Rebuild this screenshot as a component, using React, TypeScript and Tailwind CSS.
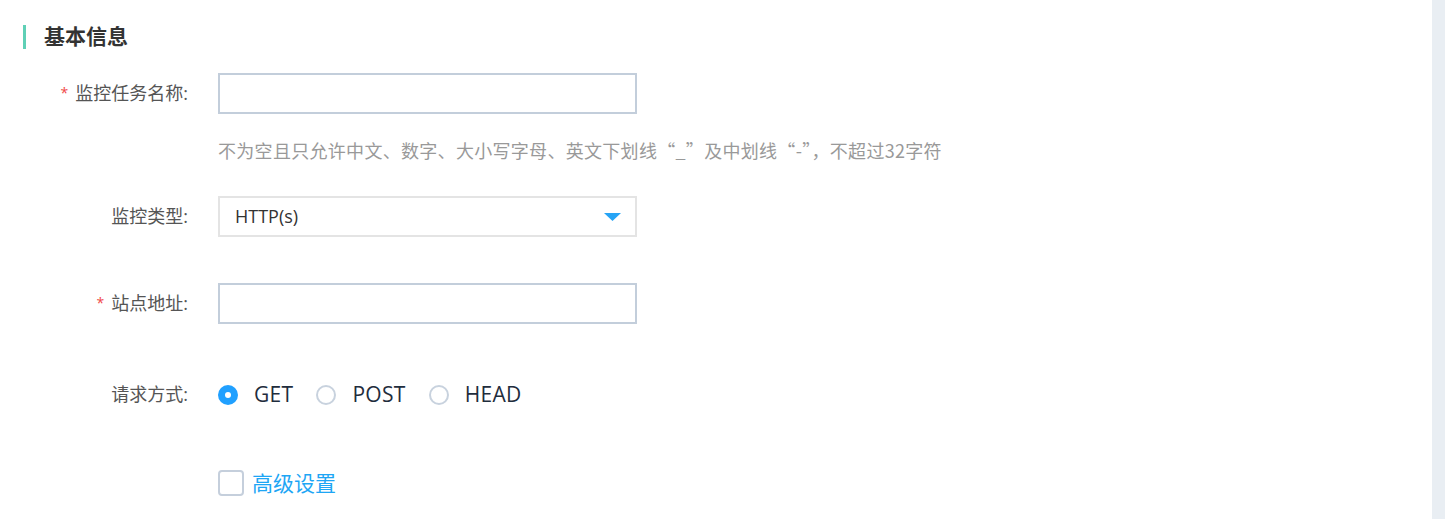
import React from "react";

const font = { fontFamily: '"Open Sans", "Noto Sans CJK SC", sans-serif' };
const cjk = { fontFamily: '"Noto Sans CJK SC", "Open Sans", sans-serif' };

function Label({ text, required }: { text: string; required?: boolean }) {
  return (
    <div className="w-[188px] shrink-0 text-right text-[18px] text-[#555]">
      {required && <span className="text-[#f04848] text-[14px] mr-[7px] align-[2px]">*</span>}
      {text}:
    </div>
  );
}

function Radio({ label, checked }: { label: string; checked?: boolean }) {
  return (
    <label className="flex items-center mr-[23px]">
      {checked ? (
        <span className="w-[20px] h-[20px] rounded-full bg-[#20a0ff] flex items-center justify-center">
          <span className="w-[6px] h-[6px] rounded-full bg-white" />
        </span>
      ) : (
        <span className="w-[20px] h-[20px] rounded-full border-2 border-[#c8d2de] bg-white" />
      )}
      <span className="ml-[16px] text-[21px] tracking-[0.3px] text-[#1f2d3d]">{label}</span>
    </label>
  );
}

export default function App() {
  return (
    <div className="flex w-[1446px] h-[522px] bg-white" style={font}>
      <div className="flex-1">
        <div className="flex items-center h-[24px] mt-[25px] ml-[23px]">
          <div className="w-[3px] h-[24px] bg-[#5fd0b6]" />
          <h2 className="ml-[18px] text-[21px] font-bold text-[#333]">基本信息</h2>
        </div>

        <div className="flex items-center mt-[24px]">
          <Label text="监控任务名称" required />
          <input className="ml-[30px] w-[419px] h-[41px] border-2 border-[#c3cedb] outline-none px-3" />
        </div>
        <p className="ml-[218px] mt-[23px] text-[18px] tracking-[0.3px] text-[#999]" style={cjk}>
          不为空且只允许中文、数字、大小写字母、英文下划线“_”及中划线“-”，不超过32字符
        </p>

        <div className="flex items-center mt-[32px]">
          <Label text="监控类型" />
          <div className="ml-[30px] w-[419px] h-[41px] border-2 border-[#e4e4e4] flex items-center justify-between pl-[15px] pr-[14px]">
            <span className="text-[18px] text-[#333]">HTTP(s)</span>
            <svg width="17" height="8" viewBox="0 0 17 8">
              <path d="M0 0 H17 L8.5 8 Z" fill="#26a4f5" />
            </svg>
          </div>
        </div>

        <div className="flex items-center mt-[46px]">
          <Label text="站点地址" required />
          <input className="ml-[30px] w-[419px] h-[41px] border-2 border-[#c3cedb] outline-none px-3" />
        </div>

        <div className="flex items-center mt-[55px]">
          <Label text="请求方式" />
          <div className="ml-[30px] flex items-center">
            <Radio label="GET" checked />
            <Radio label="POST" />
            <Radio label="HEAD" />
          </div>
        </div>

        <div className="flex items-center ml-[218px] mt-[57px]">
          <span className="w-[26px] h-[26px] rounded-[4px] border-2 border-[#c5cfdc] bg-white" />
          <span className="ml-[8px] text-[21px] text-[#1ea6f5]">高级设置</span>
        </div>
      </div>
      <div className="w-[13px] h-[519px] bg-[#e9eef3] mr-[1px]" />
    </div>
  );
}
